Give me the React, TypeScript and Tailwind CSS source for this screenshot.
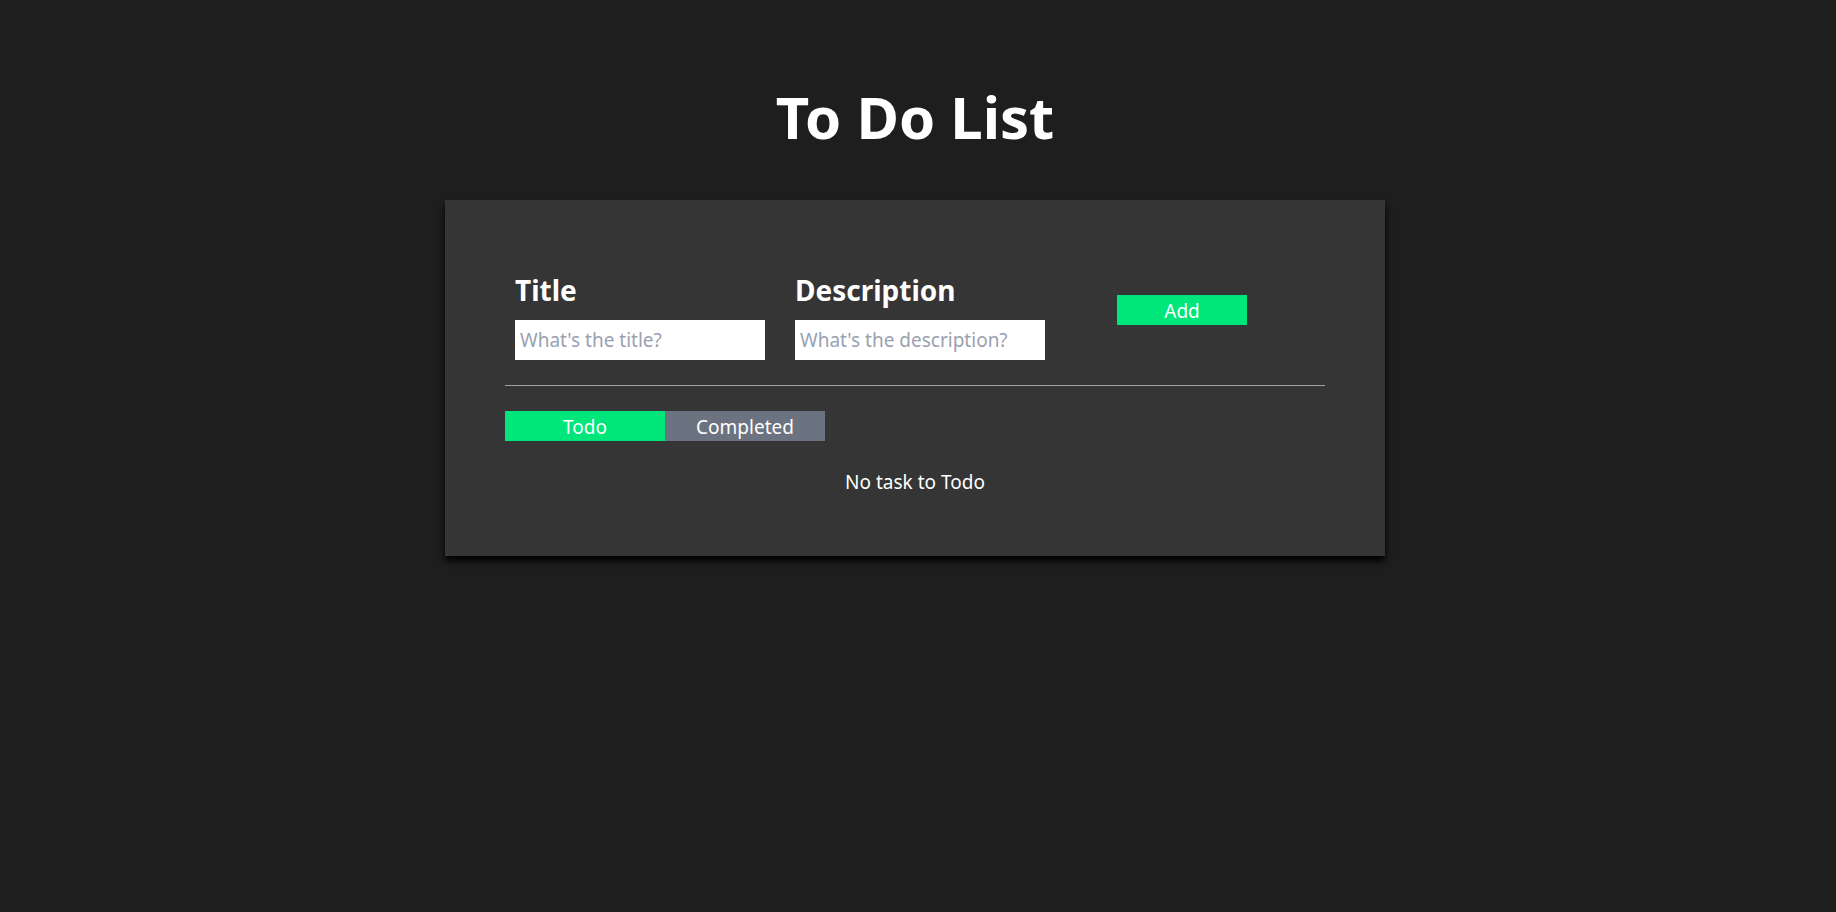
import { useState } from 'react';

export default function App() {
  const [tab, setTab] = useState<'todo' | 'completed'>('todo');

  return (
    <div className="min-h-screen bg-[#1e1e1e] text-white font-['Noto_Sans',sans-serif] pt-[88px] pr-[6px]">
      <h1 className="text-center text-[58px] leading-none font-bold">To Do List</h1>

      {/* Card */}
      <div className="w-[940px] mx-auto mt-[54px] bg-[#353535] px-[60px] pt-[72px] pb-[60px] shadow-[0_5px_7px_#000]">
        <div className="flex items-start pl-[10px] pb-[25px] border-b border-[#a3a3a3]">
          <div className="flex flex-col">
            <label className="text-[28px] leading-[36px] font-bold mb-[12px]">Title</label>
            <input
              className="w-[250px] h-[40px] bg-white px-[5px] text-[19px] text-gray-800 placeholder:text-gray-400 outline-none"
              placeholder="What's the title?"
            />
          </div>
          <div className="flex flex-col ml-[30px]">
            <label className="text-[28px] leading-[36px] font-bold mb-[12px]">Description</label>
            <input
              className="w-[250px] h-[40px] bg-white px-[5px] text-[19px] text-gray-800 placeholder:text-gray-400 outline-none"
              placeholder="What's the description?"
            />
          </div>
          <button className="ml-[72px] mt-[23px] w-[130px] h-[30px] pt-[2px] bg-[#00e67a] text-[19px] leading-none text-white">
            Add
          </button>
        </div>

        <div className="flex mt-[25px]">
          <button
            onClick={() => setTab('todo')}
            className={tab === 'todo' ? 'w-[160px] h-[30px] pt-[2px] bg-[#00e67a] text-[19px] leading-none' : 'w-[160px] h-[30px] pt-[2px] bg-[#6b7280] text-[19px] leading-none'}
          >
            Todo
          </button>
          <button
            onClick={() => setTab('completed')}
            className={tab === 'completed' ? 'w-[160px] h-[30px] pt-[2px] bg-[#00e67a] text-[19px] leading-none' : 'w-[160px] h-[30px] pt-[2px] bg-[#6b7280] text-[19px] leading-none'}
          >
            Completed
          </button>
        </div>

        <p className="mt-[27px] text-center text-[19px] leading-[28px]">
          {tab === 'todo' ? 'No task to Todo' : 'No task Completed'}
        </p>
      </div>
    </div>
  );
}
